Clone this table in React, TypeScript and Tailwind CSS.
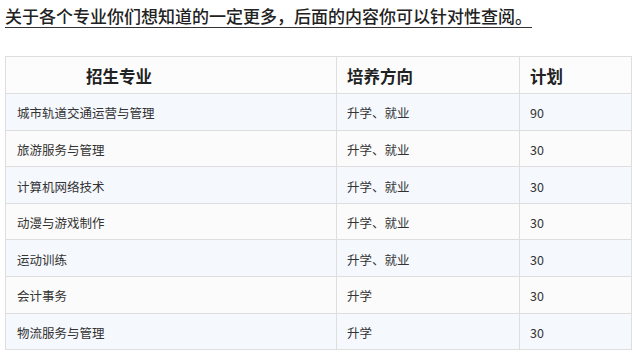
import React from "react";

const rows: [string, string, string][] = [
  ["城市轨道交通运营与管理", "升学、就业", "90"],
  ["旅游服务与管理", "升学、就业", "30"],
  ["计算机网络技术", "升学、就业", "30"],
  ["动漫与游戏制作", "升学、就业", "30"],
  ["运动训练", "升学、就业", "30"],
  ["会计事务", "升学", "30"],
  ["物流服务与管理", "升学", "30"],
];

export default function App() {
  return (
    <div
      className="w-[632px] h-[359px] bg-white text-[#333] overflow-hidden"
      style={{ fontFamily: '"Noto Sans CJK SC", "Noto Sans", sans-serif' }}
    >
      <div className="pl-[5px] pt-[4px]">
        <span className="inline-block text-[17px] leading-[22px] border-b border-[#333] text-[#222] font-medium">
          关于各个专业你们想知道的一定更多，后面的内容你可以针对性查阅。
        </span>
      </div>
      <div className="pl-[5px] pt-[28px]">
        <table className="border-collapse w-[626px] table-fixed">
          <colgroup>
            <col className="w-[331px]" />
            <col className="w-[183px]" />
            <col className="w-[112px]" />
          </colgroup>
          <thead>
            <tr className="h-[37px] bg-[#fcfcfc]">
              <th className="border border-[#dedede] text-left pl-[80px] pt-[2px] text-[16.5px] font-bold text-[#222]">招生专业</th>
              <th className="border border-[#dedede] text-left pl-[10px] pt-[2px] text-[16.5px] font-bold text-[#222]">培养方向</th>
              <th className="border border-[#dedede] text-left pl-[10px] pt-[2px] text-[16.5px] font-bold text-[#222]">计划</th>
            </tr>
          </thead>
          <tbody>
            {rows.map((r, i) => (
              <tr key={i} className={i % 2 === 0 ? "h-[36.6px] bg-[#f5f8fd]" : "h-[36.6px] bg-[#fbfbfb]"}>
                <td className="border border-[#dedede] pl-[11px] pt-[4px] text-[12.5px]">{r[0]}</td>
                <td className="border border-[#dedede] pl-[10px] pt-[4px] text-[12.5px]">{r[1]}</td>
                <td className="border border-[#dedede] pl-[10px] pt-[4px] text-[12.5px]">{r[2]}</td>
              </tr>
            ))}
          </tbody>
        </table>
      </div>
    </div>
  );
}
